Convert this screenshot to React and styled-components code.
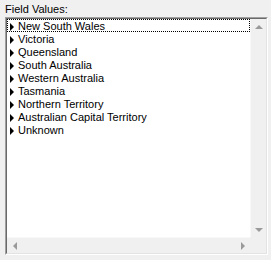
import styled, { createGlobalStyle } from "styled-components";

const GlobalStyle = createGlobalStyle`
  body {
    margin: 0;
    background: #f0f0f0;
    font-family: "Liberation Sans", Arial, sans-serif;
  }
`;

const Panel = styled.div`
  width: 271px;
  height: 260px;
  padding: 2px 3px 0 5px;
  box-sizing: border-box;
`;

const Label = styled.div`
  font-size: 11px;
  line-height: 15px;
  color: #000;
  height: 15px;
`;

const ListBox = styled.div`
  width: 263px;
  height: 238px;
  box-sizing: border-box;
  border: 1px solid;
  border-color: #a0a0a0 #ffffff #ffffff #a0a0a0;
`;

const Inner = styled.div`
  height: 100%;
  box-sizing: border-box;
  border: 1px solid;
  border-color: #696969 #e3e3e3 #e3e3e3 #696969;
  background: #fff;
  display: grid;
  grid-template-columns: 1fr 16px;
  grid-template-rows: 1fr 16px;
`;

const List = styled.ul`
  margin: 0;
  padding: 0;
  list-style: none;
  overflow: hidden;
`;

const Row = styled.li`
  height: 13px;
  display: flex;
  align-items: center;
  gap: 4px;
  padding: 2px 0 0 2px;
  box-sizing: border-box;
  font-size: 11px;
  line-height: 11px;
  color: #000;
  white-space: nowrap;
  outline: ${(p) => (p.$focused ? "1px dotted #000" : "none")};
  outline-offset: -1px;
`;

const Caret = styled.span`
  width: 0;
  height: 0;
  margin-left: 1px;
  border-top: 4px solid transparent;
  border-bottom: 4px solid transparent;
  border-left: 4px solid #000;
`;

const VScroll = styled.div`
  background: #f0f0f0;
  border-left: 1px solid #f8f8f8;
  display: flex;
  flex-direction: column;
  justify-content: space-between;
`;

const HScroll = styled.div`
  background: #f0f0f0;
  border-top: 1px solid #f8f8f8;
  display: flex;
  justify-content: space-between;
`;

const Corner = styled.div`
  background: #f0f0f0;
`;

const ArrowButton = styled.div`
  width: 16px;
  height: 16px;
  display: flex;
  align-items: center;
  justify-content: center;
  flex-shrink: 0;
`;

const Arrow = ({ dir }) => {
  const pts = {
    up: "0,6 4,2 8,6",
    down: "0,3 4,7 8,3",
    left: "6,0 2,4 6,8",
    right: "3,0 7,4 3,8",
  };
  return (
    <svg width="9" height="9" viewBox="0 0 9 9">
      <polygon points={pts[dir]} fill="#9a9a9a" />
    </svg>
  );
};

const regions = [
  "New South Wales",
  "Victoria",
  "Queensland",
  "South Australia",
  "Western Australia",
  "Tasmania",
  "Northern Territory",
  "Australian Capital Territory",
  "Unknown",
];

export default function App() {
  return (
    <>
      <GlobalStyle />
      <Panel>
        <Label>Field Values:</Label>
        <ListBox>
          <Inner>
            <List>
              {regions.map((name, i) => (
                <Row key={name} $focused={i === 0}>
                  <Caret />
                  {name}
                </Row>
              ))}
            </List>
            <VScroll>
              <ArrowButton>
                <Arrow dir="up" />
              </ArrowButton>
              <ArrowButton>
                <Arrow dir="down" />
              </ArrowButton>
            </VScroll>
            <HScroll>
              <ArrowButton>
                <Arrow dir="left" />
              </ArrowButton>
              <ArrowButton>
                <Arrow dir="right" />
              </ArrowButton>
            </HScroll>
            <Corner />
          </Inner>
        </ListBox>
      </Panel>
    </>
  );
}
